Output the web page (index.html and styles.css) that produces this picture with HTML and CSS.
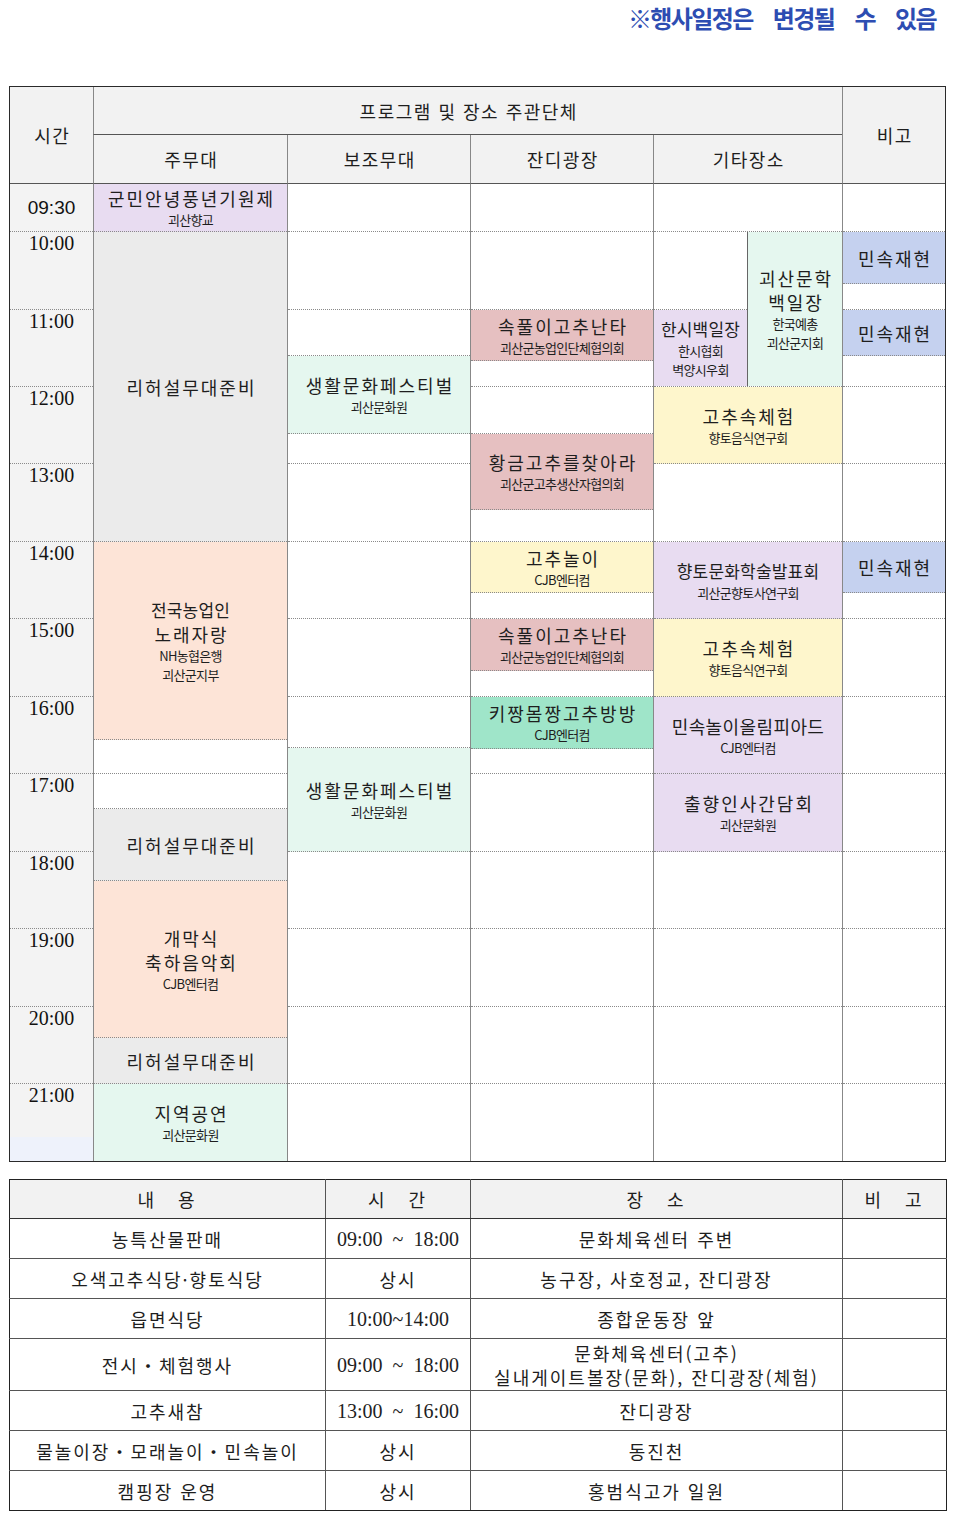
FILE: index.html
```html
<!DOCTYPE html>
<html lang="ko">
<head>
<meta charset="utf-8">
<title>행사일정</title>
<link rel="stylesheet" href="styles.css">
</head>
<body>
<div class="notice">※행사일정은 변경될 수 있음</div>

<div class="schedule">
  <div class="head">
    <div class="h-time">시간</div>
    <div class="h-prog">프로그램 및 장소 주관단체</div>
    <div class="h-note">비고</div>
    <div class="h-col h-c2">주무대</div>
    <div class="h-col h-c3">보조무대</div>
    <div class="h-col h-c4">잔디광장</div>
    <div class="h-col h-c5">기타장소</div>
  </div>

  <div class="body">
    <div class="col w-time col-time">
      <div class="seg tm tm0" style="height:48px">09:30</div>
      <div class="seg tm" style="height:78px">10:00</div>
      <div class="seg tm" style="height:77px">11:00</div>
      <div class="seg tm" style="height:77px">12:00</div>
      <div class="seg tm" style="height:78px">13:00</div>
      <div class="seg tm" style="height:77px">14:00</div>
      <div class="seg tm" style="height:78px">15:00</div>
      <div class="seg tm" style="height:77px">16:00</div>
      <div class="seg tm" style="height:78px">17:00</div>
      <div class="seg tm" style="height:77px">18:00</div>
      <div class="seg tm" style="height:78px">19:00</div>
      <div class="seg tm" style="height:77px">20:00</div>
      <div class="seg tm tm-last" style="height:77px">21:00</div>
    </div>

    <div class="col w-main">
      <div class="seg ev c-purple" style="height:48px"><div class="t">군민안녕풍년기원제</div><div class="s">괴산향교</div></div>
      <div class="seg ev c-gray" style="height:310px"><div class="t">리허설무대준비</div></div>
      <div class="seg ev c-peach" style="height:198px"><div class="t t-17">전국농업인</div><div class="t">노래자랑</div><div class="s">NH농협은행</div><div class="s">괴산군지부</div></div>
      <div class="seg" style="height:34px"></div>
      <div class="seg" style="height:35px"></div>
      <div class="seg ev c-gray" style="height:72px"><div class="t">리허설무대준비</div></div>
      <div class="seg ev c-peach" style="height:157px"><div class="t">개막식</div><div class="t">축하음악회</div><div class="s">CJB엔터컴</div></div>
      <div class="seg ev c-gray" style="height:46px"><div class="t">리허설무대준비</div></div>
      <div class="seg ev c-mint" style="height:77px"><div class="t">지역공연</div><div class="s">괴산문화원</div></div>
    </div>

    <div class="col w-sub">
      <div class="seg" style="height:48px"></div>
      <div class="seg" style="height:78px"></div>
      <div class="seg" style="height:46px"></div>
      <div class="seg ev c-mint" style="height:78px"><div class="t">생활문화페스티벌</div><div class="s">괴산문화원</div></div>
      <div class="seg" style="height:30px"></div>
      <div class="seg" style="height:78px"></div>
      <div class="seg" style="height:77px"></div>
      <div class="seg" style="height:78px"></div>
      <div class="seg" style="height:51px"></div>
      <div class="seg ev c-mint" style="height:104px"><div class="t">생활문화페스티벌</div><div class="s">괴산문화원</div></div>
      <div class="seg" style="height:77px"></div>
      <div class="seg" style="height:78px"></div>
      <div class="seg" style="height:77px"></div>
      <div class="seg" style="height:77px"></div>
    </div>

    <div class="col w-lawn">
      <div class="seg" style="height:48px"></div>
      <div class="seg" style="height:78px"></div>
      <div class="seg ev c-pink" style="height:51px"><div class="t">속풀이고추난타</div><div class="s">괴산군농업인단체협의회</div></div>
      <div class="seg" style="height:26px"></div>
      <div class="seg" style="height:47px"></div>
      <div class="seg ev c-pink" style="height:76px"><div class="t">황금고추를찾아라</div><div class="s">괴산군고추생산자협의회</div></div>
      <div class="seg" style="height:32px"></div>
      <div class="seg ev c-yellow" style="height:51px"><div class="t">고추놀이</div><div class="s">CJB엔터컴</div></div>
      <div class="seg" style="height:26px"></div>
      <div class="seg ev c-pink" style="height:52px"><div class="t">속풀이고추난타</div><div class="s">괴산군농업인단체협의회</div></div>
      <div class="seg" style="height:26px"></div>
      <div class="seg ev c-green" style="height:52px"><div class="t">키짱몸짱고추방방</div><div class="s">CJB엔터컴</div></div>
      <div class="seg" style="height:25px"></div>
      <div class="seg" style="height:78px"></div>
      <div class="seg" style="height:77px"></div>
      <div class="seg" style="height:78px"></div>
      <div class="seg" style="height:77px"></div>
      <div class="seg" style="height:77px"></div>
    </div>

    <div class="col w-etc">
      <div class="seg" style="height:48px"></div>
      <div class="seg split" style="height:155px">
        <div class="sub sub-l">
          <div class="seg" style="height:78px"></div>
          <div class="seg ev c-purple" style="height:76px"><div class="t t-17">한시백일장</div><div class="s">한시협회</div><div class="s">벽양시우회</div></div>
        </div>
        <div class="sub sub-r">
          <div class="seg ev c-mint" style="height:154px"><div class="t">괴산문학</div><div class="t">백일장</div><div class="s">한국예총</div><div class="s">괴산군지회</div></div>
        </div>
      </div>
      <div class="seg ev c-yellow" style="height:77px"><div class="t">고추속체험</div><div class="s">향토음식연구회</div></div>
      <div class="seg" style="height:78px"></div>
      <div class="seg ev c-purple" style="height:77px"><div class="t t-17">향토문화학술발표회</div><div class="s">괴산군향토사연구회</div></div>
      <div class="seg ev c-yellow" style="height:78px"><div class="t">고추속체험</div><div class="s">향토음식연구회</div></div>
      <div class="seg ev c-purple" style="height:77px"><div class="t t-18">민속놀이올림피아드</div><div class="s">CJB엔터컴</div></div>
      <div class="seg ev c-purple" style="height:78px"><div class="t">출향인사간담회</div><div class="s">괴산문화원</div></div>
      <div class="seg" style="height:77px"></div>
      <div class="seg" style="height:78px"></div>
      <div class="seg" style="height:77px"></div>
      <div class="seg" style="height:77px"></div>
    </div>

    <div class="col w-note">
      <div class="seg" style="height:48px"></div>
      <div class="seg ev c-blue" style="height:52px"><div class="t">민속재현</div></div>
      <div class="seg" style="height:26px"></div>
      <div class="seg ev c-blue" style="height:46px"><div class="t">민속재현</div></div>
      <div class="seg" style="height:31px"></div>
      <div class="seg" style="height:77px"></div>
      <div class="seg" style="height:78px"></div>
      <div class="seg ev c-blue" style="height:51px"><div class="t">민속재현</div></div>
      <div class="seg" style="height:26px"></div>
      <div class="seg" style="height:78px"></div>
      <div class="seg" style="height:77px"></div>
      <div class="seg" style="height:78px"></div>
      <div class="seg" style="height:77px"></div>
      <div class="seg" style="height:78px"></div>
      <div class="seg" style="height:77px"></div>
      <div class="seg" style="height:77px"></div>
    </div>
  </div>
</div>

<table class="info">
  <colgroup>
    <col class="ic1"><col class="ic2"><col class="ic3"><col class="ic4">
  </colgroup>
  <thead>
    <tr><th>내　용</th><th>시　간</th><th>장　소</th><th>비　고</th></tr>
  </thead>
  <tbody>
    <tr><td>농특산물판매</td><td class="num">09:00&nbsp; ~&nbsp; 18:00</td><td>문화체육센터 주변</td><td></td></tr>
    <tr><td>오색고추식당·향토식당</td><td>상시</td><td>농구장, 사호정교, 잔디광장</td><td></td></tr>
    <tr><td>읍면식당</td><td class="num">10:00~14:00</td><td>종합운동장 앞</td><td></td></tr>
    <tr class="tall"><td>전시・체험행사</td><td class="num">09:00&nbsp; ~&nbsp; 18:00</td><td>문화체육센터(고추)<br>실내게이트볼장(문화), 잔디광장(체험)</td><td></td></tr>
    <tr><td>고추새참</td><td class="num">13:00&nbsp; ~&nbsp; 16:00</td><td>잔디광장</td><td></td></tr>
    <tr><td>물놀이장・모래놀이・민속놀이</td><td>상시</td><td>동진천</td><td></td></tr>
    <tr><td>캠핑장 운영</td><td>상시</td><td>홍범식고가 일원</td><td></td></tr>
  </tbody>
</table>
</body>
</html>
```

FILE: styles.css
```css
* { box-sizing: border-box; }

body {
  margin: 0;
  background: #fff;
  color: #1e1e1e;
  font-family: "Noto Sans CJK KR", "Noto Sans", sans-serif;
}

.notice {
  height: 35px;
  line-height: 35px;
  padding-right: 20px;
  text-align: right;
  font-size: 24px;
  font-weight: 700;
  letter-spacing: -1.6px;
  word-spacing: 15px;
  color: #2d4db2;
}

/* ---------- schedule ---------- */
.schedule {
  margin: 51px 0 0 9px;
  width: 937px;
  border: 1px solid #2a2a2a;
}

.head {
  display: grid;
  grid-template-columns: 83px 194px 183px 183px 189px 103px;
  grid-template-rows: 48px 49px;
  background: #f2f2f2;
  font-size: 18px;
  letter-spacing: 1.5px;
}
.head > div {
  display: flex;
  align-items: center;
  justify-content: center;
  border-bottom: 1px solid #555;
  padding-left: 1.5px;
}
.h-time { grid-column: 1; grid-row: 1 / 3; }
.h-prog { grid-column: 2 / 6; grid-row: 1; border-left: 1px solid #888; }
.h-note { grid-column: 6; grid-row: 1 / 3; border-left: 1px solid #888; }
.h-col { grid-row: 2; border-left: 1px solid #888; }
.h-c2 { grid-column: 2; }
.h-c3 { grid-column: 3; }
.h-c4 { grid-column: 4; }
.h-c5 { grid-column: 5; }

.body {
  display: flex;
  height: 977px;
}
.col {
  display: flex;
  flex-direction: column;
  border-left: 1px solid #888;
}
.col-time { border-left: none; background: #f3f3f3; }
.w-time { width: 83px; }
.w-main { width: 194px; }
.w-sub { width: 183px; }
.w-lawn { width: 183px; }
.w-etc { width: 189px; }
.w-note { width: 103px; }

.seg {
  flex: none;
  border-bottom: 1px dotted #8a8a8a;
}
.col > .seg:last-child,
.sub > .seg:last-child { border-bottom: none; }

.split { display: flex; }
.sub { display: flex; flex-direction: column; }
.sub-l { width: 93px; }
.sub-r { width: 95px; border-left: 1px solid #666; }

.tm {
  font-family: "Liberation Serif", serif;
  font-size: 20px;
  line-height: 22px;
  text-align: center;
  color: #111;
}
.tm0 {
  font-family: "Liberation Sans", sans-serif;
  font-size: 19px;
  display: flex;
  align-items: center;
  justify-content: center;
}
.tm-last {
  background: linear-gradient(to bottom, #f3f3f3 0, #f3f3f3 53px, #eef2fb 53px);
}

.ev {
  display: flex;
  flex-direction: column;
  align-items: center;
  justify-content: center;
  text-align: center;
  overflow: hidden;
}
.t {
  font-size: 18px;
  line-height: 24px;
  letter-spacing: 2px;
  padding-left: 2px;
  white-space: nowrap;
}
.t-17 { font-size: 17px; letter-spacing: 0.2px; padding-left: 0; }
.t-18 { font-size: 18px; letter-spacing: 0.4px; padding-left: 0; }
.s {
  font-size: 13px;
  line-height: 19px;
  letter-spacing: -0.7px;
  white-space: nowrap;
}

.c-purple { background: #e8dcf1; }
.c-gray { background: #ebebeb; }
.c-peach { background: #fde4d7; }
.c-mint { background: #e5f7ef; }
.c-pink { background: #e6c0c1; }
.c-yellow { background: #fef6cc; }
.c-green { background: #9fe5c9; }
.c-blue { background: #c5d1ef; }

/* ---------- info table ---------- */
.info {
  margin: 17px 0 0 9px;
  width: 937px;
  border-collapse: collapse;
  table-layout: fixed;
  font-size: 18px;
  letter-spacing: 2px;
}
.ic1 { width: 316px; }
.ic2 { width: 145px; }
.ic3 { width: 372px; }
.ic4 { width: 104px; }

.info th,
.info td {
  border: 1px solid #555;
  padding: 0;
  text-align: center;
  font-weight: 400;
  line-height: 24px;
}
.info th {
  height: 39px;
  background: #f2f2f2;
  border-top-color: #222;
  border-bottom-color: #333;
  letter-spacing: 3px;
}
.info td { height: 40px; }
.info tr.tall td { height: 52px; }
.info tr > :first-child { border-left-color: #222; }
.info tr > :last-child { border-right-color: #222; }
.info tbody tr:last-child td { border-bottom-color: #222; }
.info .num {
  font-family: "Liberation Serif", serif;
  font-size: 20px;
  letter-spacing: 0;
}
```
